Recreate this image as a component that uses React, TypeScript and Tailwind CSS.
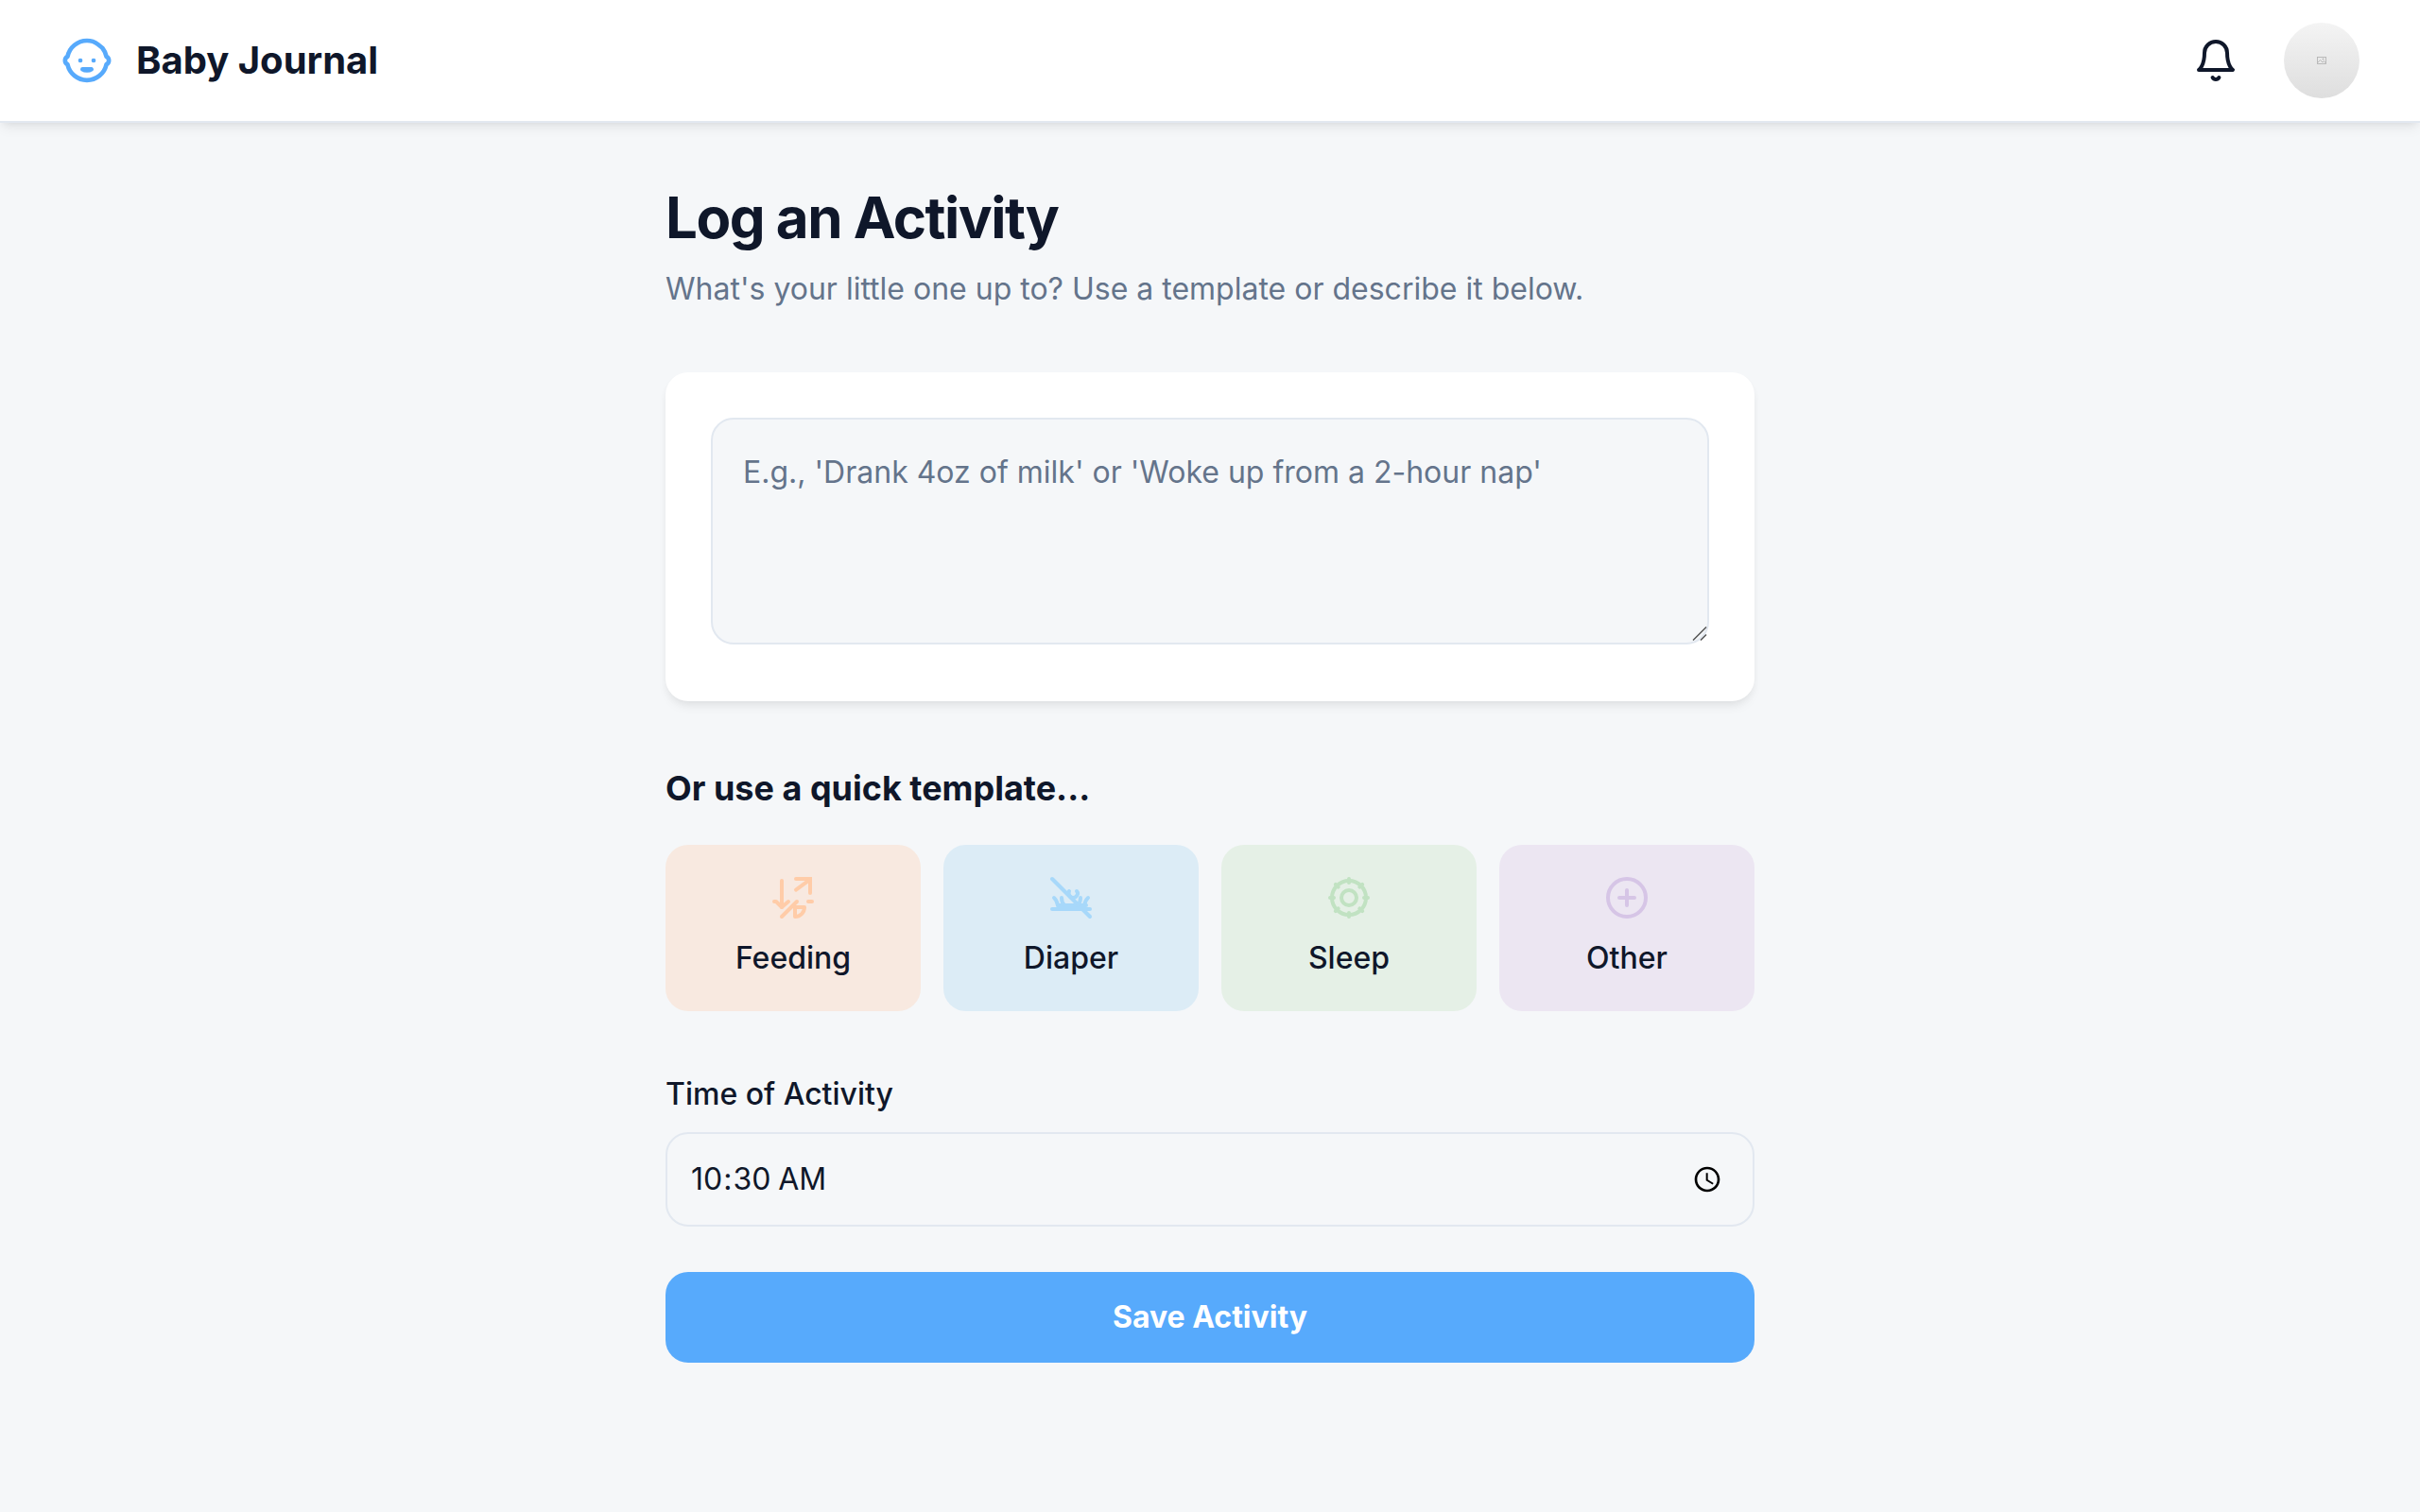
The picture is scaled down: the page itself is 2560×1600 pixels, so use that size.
import type { ReactNode } from 'react';

function Icon({ children, className }: { children: ReactNode; className: string }) {
  return (
    <svg
      viewBox="0 0 24 24"
      fill="none"
      stroke="currentColor"
      strokeWidth={2}
      strokeLinecap="round"
      strokeLinejoin="round"
      aria-hidden="true"
      className={className}
    >
      {children}
    </svg>
  );
}

const templates = [
  {
    label: 'Feeding',
    card: 'bg-[#f8e9e0]',
    tint: 'text-[#ffcca8]',
    art: (
      <>
        <path d="M6 3v14" />
        <path d="M2 14h1l3 3 3.500-3" />
        <path d="M6 22l8-8" />
        <path d="M13 17v5a5 5 0 0 0 5-5z" />
        <path d="M20 14h2" />
        <path d="M13.500 2H21v7.500" strokeLinejoin="miter" />
        <path d="M13.500 7.800L21 2.300" />
      </>
    ),
  },
  {
    label: 'Diaper',
    card: 'bg-[#dcecf6]',
    tint: 'text-[#a7d8fa]',
    art: (
      <>
        <path d="M2 2l20 20" />
        <path d="M2 18h20" />
        <path d="M5 16h15" />
        <path d="M3 12c1.200 1 1.700 2.500 2 4" />
        <path d="M7 12c0 1.500.5 3 1.500 4" />
        <path d="M21 12c-1.200 1-1.700 2.500-2 4" />
        <path d="M17 12c0 1.500-.5 3-1.500 4" />
        <path d="M11 8.500c-.8 1.500.5 3.500 2 3.500s3.500-2 2-3.500" />
      </>
    ),
  },
  {
    label: 'Sleep',
    card: 'bg-[#e5f0e6]',
    tint: 'text-[#c1e2c2]',
    art: (
      <>
        <circle cx="12" cy="12" r="9" />
        <circle cx="12" cy="12" r="4" />
        <path d="M12 2v2M12 20v2M2 12h2M20 12h2M4.930 4.930l1.410 1.410M17.660 17.660l1.410 1.410M6.340 17.660l-1.410 1.410M19.070 4.930l-1.410 1.410" />
      </>
    ),
  },
  {
    label: 'Other',
    card: 'bg-[#ece6f2]',
    tint: 'text-[#d6c5e6]',
    art: (
      <>
        <circle cx="12" cy="12" r="10" />
        <path d="M12 8v8M8 12h8" />
      </>
    ),
  },
];

export default function App() {
  return (
    <div className="min-h-screen bg-[#f5f7f9] font-[Inter,sans-serif] text-[32px] leading-[48px] text-[#0f172a] [font-optical-sizing:none]">
      <header className="flex items-center justify-between border-b-2 border-[#e2e8f0] bg-white px-16 py-6 shadow-[0_8px_12px_-2px_rgba(0,0,0,0.06),0_4px_8px_-4px_rgba(0,0,0,0.08)]">
        <div className="flex items-center gap-6">
          <Icon className="size-14 text-[#57aafc]">
            <path d="M9 12h.01M15 12h.01M10 16c.5.3 1.200.5 2 .5s1.500-.2 2-.5z" />
            <path d="M19 6.300a9 9 0 0 1 1.800 3.900 2 2 0 0 1 0 3.600 9 9 0 0 1-17.600 0 2 2 0 0 1 0-3.600A9 9 0 0 1 12 3c1.900 0 3.600.6 5 1.700z" />
          </Icon>
          <span className="text-[40px] leading-[56px] font-bold">Baby Journal</span>
        </div>
        <div className="flex items-center gap-8">
          <button type="button" aria-label="Notifications" className="rounded-full p-4">
            <Icon className="size-12">
              <path d="M6 8a6 6 0 0 1 12 0c0 7 3 9 3 9H3s3-2 3-9" />
              <path d="M10.300 21a1.940 1.940 0 0 0 3.400 0" />
            </Icon>
          </button>
          <div
            role="img"
            aria-label="Profile picture"
            className="flex size-20 items-center justify-center rounded-full bg-linear-to-b from-[#f4f4f4] via-[#e9e9e9] to-[#dedede]"
          >
            <svg viewBox="0 0 10 8" fill="none" stroke="#b4b4b4" strokeWidth={0.9} aria-hidden="true" className="h-2 w-2.5">
              <rect x="0.500" y="0.500" width="9" height="7" />
              <path d="M1 6l2.500-2.500L6 6l1.500-1.500L9.500 7" />
              <circle cx="6.500" cy="2.500" r="0.600" />
            </svg>
          </div>
        </div>
      </header>

      <main className="mx-auto w-full max-w-6xl py-16">
        <h1 className="text-[60px] leading-[72px] font-bold tracking-tight">Log an Activity</h1>
        <p className="mt-4 text-[#64748b]">What's your little one up to? Use a template or describe it below.</p>

        <form onSubmit={(e) => e.preventDefault()}>
          <div className="mt-16 rounded-3xl bg-white px-12 pt-12 pb-15 shadow-[0_8px_12px_-2px_rgba(0,0,0,0.05),0_4px_8px_-2px_rgba(0,0,0,0.06)]">
            <div className="relative">
              <textarea
                aria-label="Activity description"
                placeholder="E.g., 'Drank 4oz of milk' or 'Woke up from a 2-hour nap'"
                className="block h-60 w-full resize-none rounded-3xl border-2 border-[#e2e8f0] bg-[#f5f7f9] p-8 placeholder:text-[#64748b]"
              />
              <svg
                viewBox="0 0 16 16"
                stroke="#555555"
                strokeWidth={1.500}
                aria-hidden="true"
                className="pointer-events-none absolute right-0.5 bottom-1 size-4"
              >
                <path d="M1 15.500L15 1.500M9 15.500l6-6" />
              </svg>
            </div>
          </div>

          <h2 className="mt-16 text-[36px] leading-[56px] font-bold">Or use a quick template...</h2>
          <div className="mt-8 grid grid-cols-4 gap-6">
            {templates.map((t) => (
              <button
                key={t.label}
                type="button"
                className={`flex flex-col items-center gap-4 rounded-3xl p-8 font-medium ${t.card}`}
              >
                <Icon className={`size-12 ${t.tint}`}>{t.art}</Icon>
                <span>{t.label}</span>
              </button>
            ))}
          </div>

          <div className="mt-16 flex flex-col gap-4">
            <label htmlFor="time" className="font-medium">
              Time of Activity
            </label>
            <input
              id="time"
              type="time"
              defaultValue="10:30"
              className="h-25 w-full rounded-3xl border-2 border-[#e2e8f0] bg-[#f5f7f9] pr-8 pl-6 [&::-webkit-calendar-picker-indicator]:size-8 [&::-webkit-calendar-picker-indicator]:p-0"
            />
          </div>

          <button type="submit" className="mt-12 w-full rounded-3xl bg-[#57aafc] py-6 font-bold text-white">
            Save Activity
          </button>
        </form>
      </main>
    </div>
  );
}
